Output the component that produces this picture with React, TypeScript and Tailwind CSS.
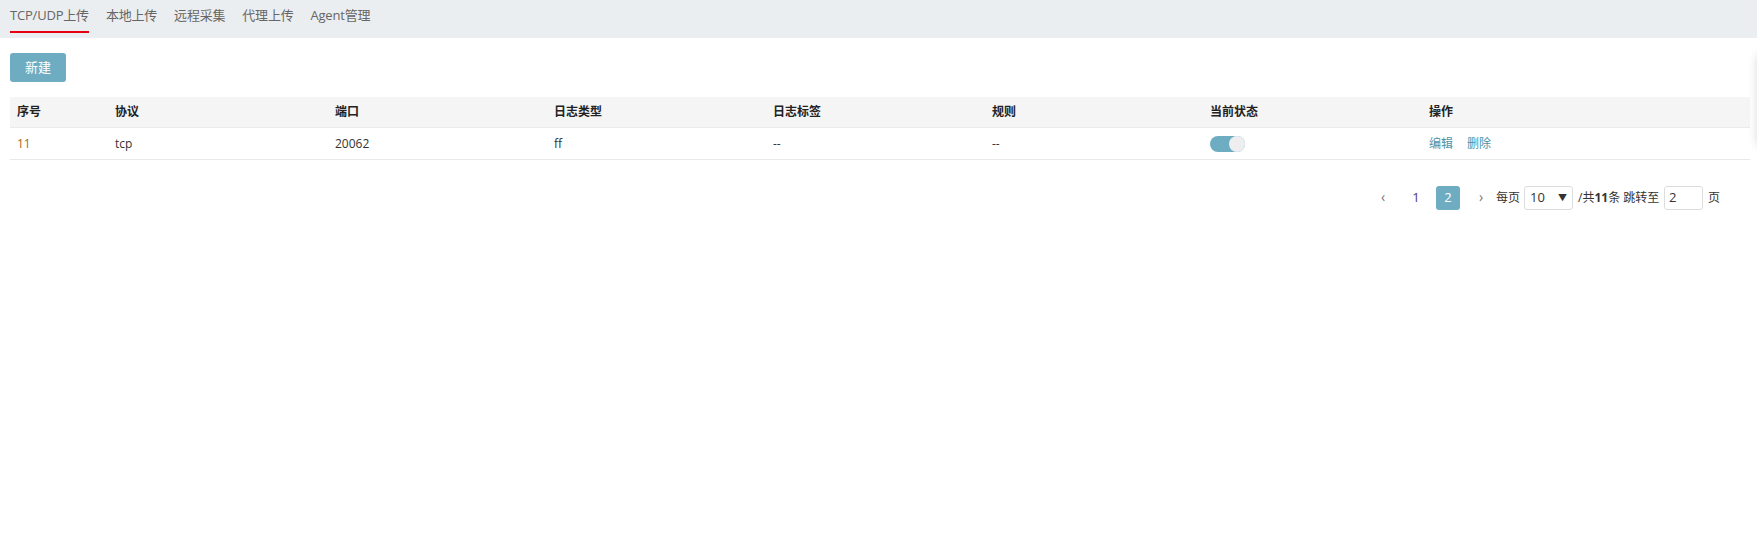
import { useState } from 'react';

const font = "font-['Open_Sans','Noto_Sans_CJK_SC',sans-serif]";

const tabs = ['TCP/UDP上传', '本地上传', '远程采集', '代理上传', 'Agent管理'];

const columns = [
  { label: '序号', w: 'w-[98px]' },
  { label: '协议', w: 'w-[220px]' },
  { label: '端口', w: 'w-[219px]' },
  { label: '日志类型', w: 'w-[219px]' },
  { label: '日志标签', w: 'w-[219px]' },
  { label: '规则', w: 'w-[218px]' },
  { label: '当前状态', w: 'w-[219px]' },
  { label: '操作', w: 'flex-1' },
];

export default function App() {
  const [enabled, setEnabled] = useState(true);
  const [active] = useState(0);

  return (
    <div className={`${font} relative w-[1757px] h-[537px] overflow-hidden bg-white text-[#333]`}>
      {/* Tabs */}
      <div className="h-[38px] bg-[#ebeef0] flex items-start gap-[17px] px-[10px]">
        {tabs.map((t, i) => (
          <div key={t} className="relative h-[38px]">
            <span className="block pt-[5px] text-[13px] leading-[20px] text-[#666] tracking-[-0.2px]">{t}</span>
            {i === active && <div className="absolute left-0 right-0 top-[31px] h-[2px] bg-[#e60012]" />}
          </div>
        ))}
      </div>

      <div className="px-[10px] pr-[7px]">
        {/* New button */}
        <button className="mt-[15px] w-[56px] h-[29px] rounded-[3px] bg-[#6eadc1] text-white text-[13px]">
          新建
        </button>

        {/* Table */}
        <div className="mt-[15px] text-[12px]">
          <div className="flex h-[31px] items-center bg-[#f5f5f5] border-b border-[#ebebeb] font-bold text-[#222]">
            {columns.map((c) => (
              <div key={c.label} className={`${c.w} pl-[7px]`}>{c.label}</div>
            ))}
          </div>
          <div className="flex h-[32px] items-center border-b border-[#e8e8e8]">
            <div className="w-[98px] pl-[7px] text-[#a06a22]">11</div>
            <div className="w-[220px] pl-[7px]">tcp</div>
            <div className="w-[219px] pl-[7px]">20062</div>
            <div className="w-[219px] pl-[7px]">ff</div>
            <div className="w-[219px] pl-[7px]">--</div>
            <div className="w-[218px] pl-[7px]">--</div>
            <div className="w-[219px] pl-[7px]">
              <button
                onClick={() => setEnabled(!enabled)}
                className={`flex w-[35px] h-[16px] rounded-full p-0 ${enabled ? 'bg-[#6eadc1] justify-end' : 'bg-[#ccc] justify-start'}`}
              >
                <span className="block w-[16px] h-[16px] rounded-full bg-[#eeeef0]" />
              </button>
            </div>
            <div className="flex-1 pl-[7px] flex gap-[14px] text-[#4a93ab]">
              <span>编辑</span>
              <span>删除</span>
            </div>
          </div>
        </div>

        {/* Pagination */}
        <div className="mt-[26px] flex justify-end items-center text-[12px] text-[#333] pr-[30px] whitespace-nowrap">
          <span className="w-[26px] -mt-[3px] text-center text-[14px] text-[#777]">‹</span>
          <span className="w-[40px] text-center text-[13px] text-[#4b3b7a]">1</span>
          <span className="mr-[6px] w-[24px] h-[24px] rounded-[3px] bg-[#6eadc1] text-white text-[13px] flex items-center justify-center">2</span>
          <span className="w-[30px] -mt-[3px] text-center text-[14px] text-[#777]">›</span>
          <span className="w-[28px]">每页</span>
          <div className="mr-[5px] w-[49px] h-[24px] border border-[#ddd] rounded-[3px] flex items-center justify-between px-[5px] text-[13px]">
            <span>10</span>
            <span className="text-[9px]">▼</span>
          </div>
          <span className="w-[86px] overflow-visible">
            /共<b>11</b>条 跳转至
          </span>
          <div className="w-[39px] h-[24px] border border-[#ddd] rounded-[3px] flex items-center px-[4px] text-[13px]">2</div>
          <span className="ml-[5px]">页</span>
        </div>
      </div>

      {/* side panel shadow at the right edge */}
      <div className="absolute top-[55px] right-[-20px] w-[20px] h-[90px] shadow-[0_0_10px_rgba(0,0,0,0.15)]" />
    </div>
  );
}
